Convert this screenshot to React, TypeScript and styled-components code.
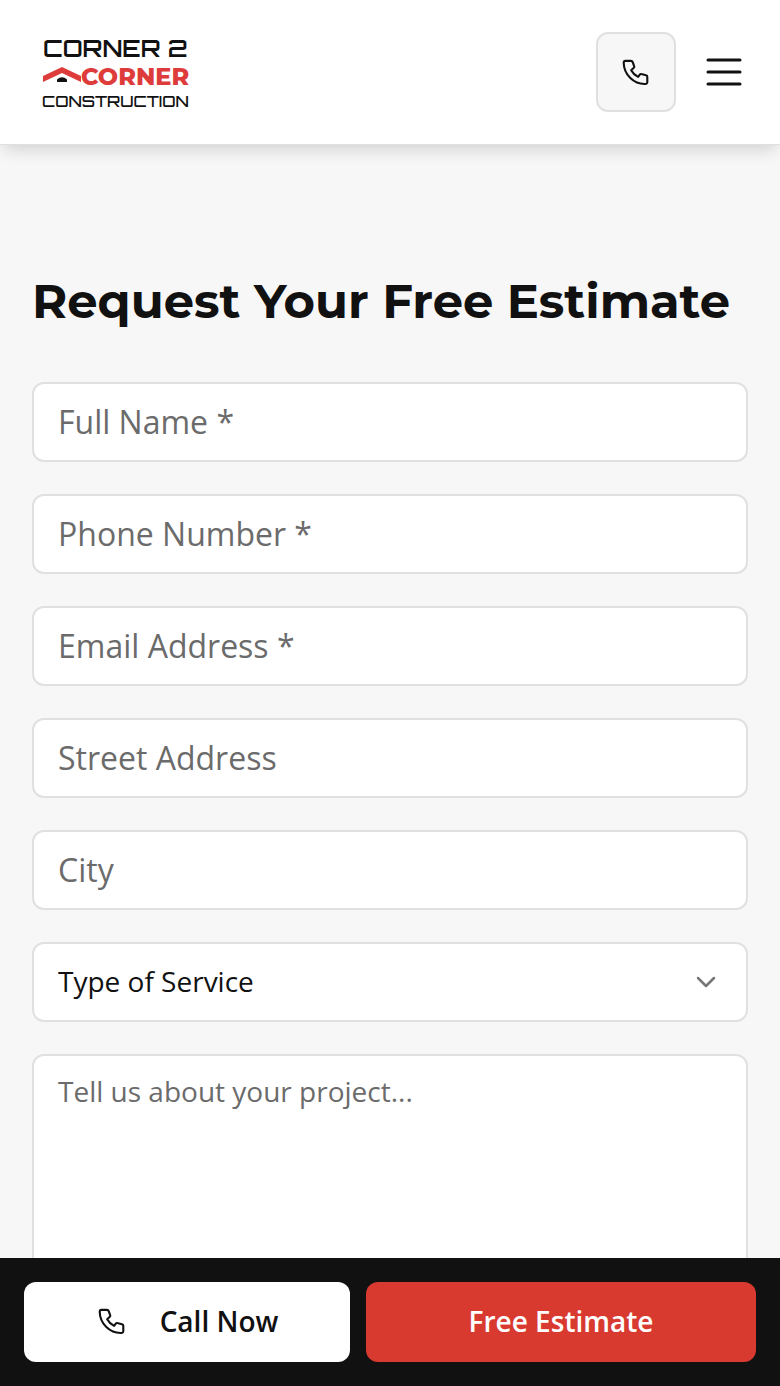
import React from 'react';
import styled, { createGlobalStyle } from 'styled-components';

const GlobalStyle = createGlobalStyle`
  *, *::before, *::after { box-sizing: border-box; }
  body {
    margin: 0;
    background: #f7f7f7;
    color: #111;
    font-family: "Open Sans", "Noto Sans", sans-serif;
  }
  button, input, select, textarea { font: inherit; color: inherit; }
`;

const Header = styled.header`
  position: sticky;
  top: 0;
  z-index: 2;
  display: flex;
  align-items: center;
  justify-content: space-between;
  padding: 32px;
  background: #fff;
  border-bottom: 1px solid #e0e0e0;
  box-shadow: 0 8px 16px -4px rgba(0, 0, 0, 0.16);
`;

const LogoLink = styled.a`
  display: block;
  margin-left: 8px;
  line-height: 0;
`;

const HeaderActions = styled.div`
  display: flex;
  align-items: center;
  gap: 24px;
`;

const PhoneButton = styled.a`
  display: flex;
  align-items: center;
  justify-content: center;
  width: 80px;
  height: 80px;
  color: #111;
  background: #f7f7f7;
  border: 2px solid #e0e0e0;
  border-radius: 12px;
`;

const MenuButton = styled.button`
  display: flex;
  align-items: center;
  justify-content: center;
  width: 48px;
  height: 48px;
  padding: 0;
  background: none;
  border: 0;
`;

const Main = styled.main`
  padding: 128px 32px 160px;
`;

const Title = styled.h1`
  margin: 0 0 52px;
  font-family: Montserrat, Inter, sans-serif;
  font-size: 48px;
  font-weight: 700;
  line-height: 57px;
`;

const Form = styled.form`
  display: flex;
  flex-direction: column;
  gap: 32px;
`;

const fieldBox = `
  display: block;
  width: 100%;
  background: #fff;
  border: 2px solid #e0e0e0;
  border-radius: 12px;
  outline: none;
  &::placeholder { color: #6b6b6b; opacity: 1; }
`;

const Input = styled.input`
  ${fieldBox}
  height: 80px;
  padding: 0 24px 2px;
  font-size: 32px;
`;

const SelectWrap = styled.div`
  position: relative;
`;

const Select = styled.select`
  ${fieldBox}
  appearance: none;
  height: 80px;
  padding: 0 64px 2px 24px;
  font-size: 28px;
`;

const Chevron = styled.svg`
  position: absolute;
  top: 24px;
  right: 26px;
  pointer-events: none;
`;

const TextArea = styled.textarea`
  ${fieldBox}
  height: 256px;
  padding: 16px 24px;
  font-size: 28px;
  line-height: 38px;
  resize: none;
`;

const ActionBar = styled.div`
  position: fixed;
  inset: auto 0 0;
  z-index: 2;
  display: grid;
  grid-template-columns: 326fr 390fr;
  gap: 16px;
  padding: 24px;
  background: #111;
`;

const Action = styled.a<{ $primary?: boolean }>`
  display: flex;
  align-items: center;
  justify-content: center;
  gap: 32px;
  height: 80px;
  padding-bottom: 2px;
  border-radius: 12px;
  font-size: 28px;
  font-weight: 600;
  text-decoration: none;
  color: ${(p) => (p.$primary ? '#fff' : '#111')};
  background: ${(p) => (p.$primary ? '#d93a30' : '#fff')};
`;

const PhoneIcon = () => (
  <svg width="32" height="32" viewBox="0 0 32 32" fill="none" stroke="currentColor" strokeWidth="2.1" strokeLinecap="round" strokeLinejoin="round" aria-hidden="true">
    <path d="M5.4 4.9H10.9C11.8 4.9 12.4 5.3 12.7 6.1L14.2 10.4C14.4 11 14.3 11.4 13.8 11.8L11.2 14.2C12.7 17 15.1 19.4 18.1 20.9L19.8 18.6C20.2 18.1 20.7 17.9 21.3 18.1L26 19.3C26.9 19.5 27.3 20 27.3 20.8V26.2C27.3 27.3 26.7 27.9 25.7 28C13.8 28.6 3.9 18.7 3.7 6.8C3.7 5.6 4.3 4.9 5.4 4.9Z" />
  </svg>
);

const LogoText = styled.text<{ $size: number; $weight: number }>`
  font-family: Orbitron, "DejaVu Sans", sans-serif;
  font-size: ${(p) => p.$size}px;
  font-weight: ${(p) => p.$weight};
  fill: #111;
`;

const LogoAccent = styled(LogoText)`
  font-family: Montserrat, "Open Sans", sans-serif;
  fill: #dd3c3a;
`;

const Logo = () => (
  <svg width="152" height="76" viewBox="0 0 152 76" role="img" aria-label="Corner 2 Corner Construction">
    <LogoText x="3" y="23" $size={24} $weight={600}>CORNER 2</LogoText>
    <path d="M3 42 22 33 41 42V48L22 39 3 48Z" fill="#dd3c3a" />
    <path d="M17 48V45.500Q22 41 27 45.500V48Z" fill="#111" />
    <LogoAccent x="41" y="51" $size={24} $weight={800}>CORNER</LogoAccent>
    <LogoText x="2" y="73" $size={16} $weight={500}>CONSTRUCTION</LogoText>
  </svg>
);

const fields = [
  { label: 'Full Name *', type: 'text', required: true },
  { label: 'Phone Number *', type: 'tel', required: true },
  { label: 'Email Address *', type: 'email', required: true },
  { label: 'Street Address', type: 'text', required: false },
  { label: 'City', type: 'text', required: false },
];

export default function App() {
  return (
    <>
      <GlobalStyle />
      <Header>
        <LogoLink href="#"><Logo /></LogoLink>
        <HeaderActions>
          <PhoneButton href="#call" aria-label="Call us"><PhoneIcon /></PhoneButton>
          <MenuButton type="button" aria-label="Open menu">
            <svg width="48" height="48" viewBox="0 0 48 48" stroke="currentColor" strokeWidth="3" strokeLinecap="round" aria-hidden="true">
              <path d="M8 12H40M8 24H40M8 36H40" />
            </svg>
          </MenuButton>
        </HeaderActions>
      </Header>
      <Main>
        <Title>Request Your Free Estimate</Title>
        <Form id="estimate">
          {fields.map((f) => (
            <Input key={f.label} type={f.type} placeholder={f.label} aria-label={f.label} required={f.required} />
          ))}
          <SelectWrap>
            <Select aria-label="Type of Service" defaultValue="">
              <option value="">Type of Service</option>
            </Select>
            <Chevron width="32" height="32" viewBox="0 0 32 32" fill="none" stroke="#777" strokeWidth="2.500" strokeLinecap="round" strokeLinejoin="round" aria-hidden="true">
              <path d="M8 12L16 20L24 12" />
            </Chevron>
          </SelectWrap>
          <TextArea aria-label="Project details" placeholder="Tell us about your project..." />
        </Form>
      </Main>
      <ActionBar>
        <Action href="#call"><PhoneIcon />Call Now</Action>
        <Action href="#estimate" $primary>Free Estimate</Action>
      </ActionBar>
    </>
  );
}
